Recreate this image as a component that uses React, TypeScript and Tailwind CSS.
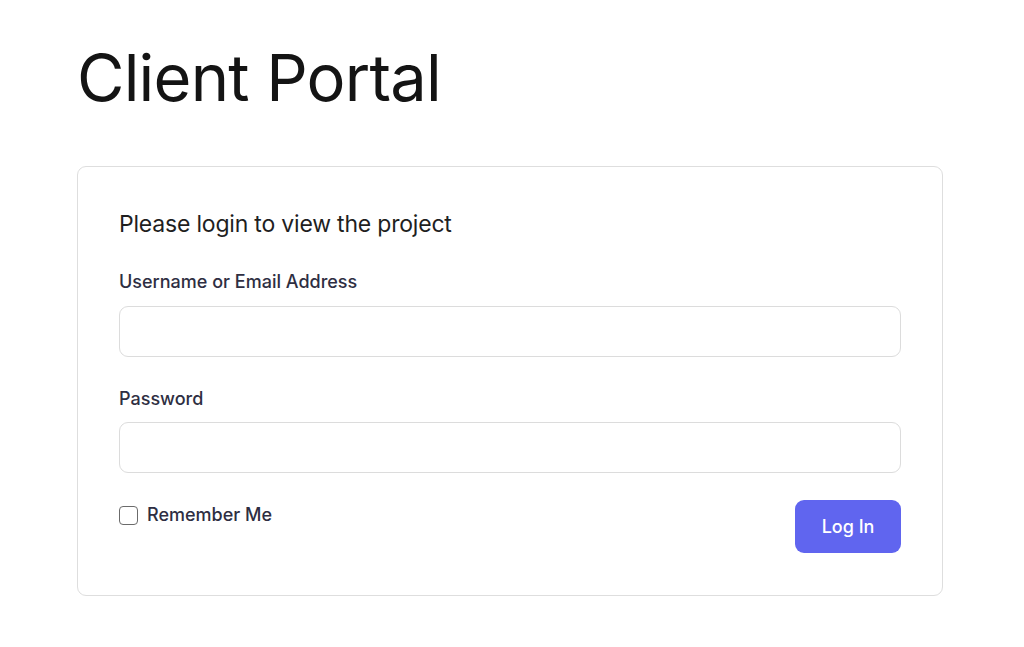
export default function App() {
  return (
    <div className="min-h-screen bg-white px-[77px] pt-[36px] font-['Inter',sans-serif] text-[#1a1a1a]">
      <h1 className="text-[65px] font-normal leading-[84px] tracking-[-0.8px] text-[#141414]">Client Portal</h1>

      <div className="mt-[46px] w-[866px] rounded-[9px] border border-[#dedede] px-[41px] pt-[42px] pb-[42px]">
        <p className="text-[23px] leading-[30px] tracking-[-0.2px] text-[#1f1f1f]">Please login to view the project</p>

        <form className="mt-[30px]">
          <label className="block text-[18px] font-medium leading-[26px] text-[#2e2e42]">Username or Email Address</label>
          <input
            type="text"
            className="mt-[11px] block h-[51px] w-full rounded-[9px] border border-[#dcdcdc] bg-white px-3 outline-none"
          />

          <label className="mt-[29px] block text-[18px] font-medium leading-[26px] text-[#2e2e42]">Password</label>
          <input
            type="password"
            className="mt-[10px] block h-[51px] w-full rounded-[9px] border border-[#dcdcdc] bg-white px-3 outline-none"
          />

          <div className="mt-[27px] flex items-start justify-between">
            <label className="mt-[3px] flex items-center gap-[9px] text-[18px] font-medium leading-[24px] text-[#2e2e42]">
              <span className="block h-[19px] w-[19px] rounded-[4px] border-[1.5px] border-[#6b6b6b] bg-white" />
              Remember Me
            </label>
            <button
              type="button"
              className="h-[53px] w-[106px] rounded-[9px] bg-[#6065ef] text-[18px] font-medium text-white"
            >
              Log In
            </button>
          </div>
        </form>
      </div>
    </div>
  );
}
